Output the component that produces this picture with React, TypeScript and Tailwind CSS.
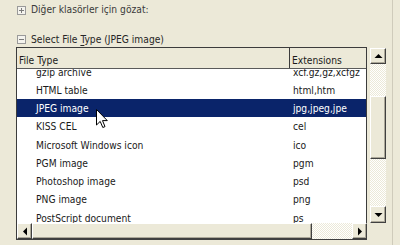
import React from "react";

const rows: [string, string][] = [
  ["gzip archive", "xcf.gz,gz,xcfgz"],
  ["HTML table", "html,htm"],
  ["JPEG image", "jpg,jpeg,jpe"],
  ["KISS CEL", "cel"],
  ["Microsoft Windows icon", "ico"],
  ["PGM image", "pgm"],
  ["Photoshop image", "psd"],
  ["PNG image", "png"],
  ["PostScript document", "ps"],
];

const track =
  "bg-[repeating-conic-gradient(#ffffff_0_25%,#ece9d8_0_50%)] bg-[length:2px_2px]";

function Btn({ dir, className = "" }: { dir: "up" | "down" | "left" | "right"; className?: string }) {
  const pts =
    dir === "up"
      ? "4,1 0,5 8,5"
      : dir === "down"
      ? "0,1 8,1 4,5"
      : dir === "left"
      ? "5,0 5,8 1,4"
      : "1,0 1,8 5,4";
  const isV = dir === "up" || dir === "down";
  return (
    <div
      className={`flex items-center justify-center bg-[#ece9d8] border-t border-l border-t-white border-l-white border-r border-b border-r-[#404040] border-b-[#404040] shadow-[inset_-1px_-1px_#aca899] ${className}`}
    >
      <svg width={isV ? 9 : 6} height={isV ? 6 : 9} viewBox={isV ? "0 0 8 6" : "0 0 6 8"}>
        <polygon points={pts} fill="#000" />
      </svg>
    </div>
  );
}

function Expander({ open }: { open: boolean }) {
  return (
    <svg width="9" height="9" viewBox="0 0 9 9" className="shrink-0">
      <rect x="0.5" y="0.5" width="8" height="8" fill="#f4f3ee" stroke="#9a9a9a" />
      <line x1="2" y1="4.5" x2="7" y2="4.5" stroke="#7a7a7a" />
      {!open && <line x1="4.5" y1="2" x2="4.5" y2="7" stroke="#7a7a7a" />}
    </svg>
  );
}

export default function App() {
  return (
    <div
      className="relative w-[400px] h-[245px] overflow-hidden bg-[#ece9d8] text-[10.2px] text-[#1a1a1a]"
      style={{ fontFamily: '"DejaVu Sans Condensed", "DejaVu Sans", "Liberation Sans", sans-serif', fontStretch: "condensed" }}
    >
      <div className="flex h-full">
        <div className="w-[393px] h-full border-r border-[#cfcbbb] flex flex-col">
          <div className="h-[20px] flex items-center pl-[17px] gap-[5px] text-[#3a3a3a]">
            <Expander open={false} />
            <span>Diğer klasörler için gözat:</span>
          </div>
          <div className="h-[12px]" />
          <div className="h-[15px] flex items-center pl-[17px] gap-[5px] text-[#262626]">
            <Expander open={true} />
            <span>
              Select File <span className="underline underline-offset-2">T</span>ype (JPEG image)
            </span>
          </div>
          <div className="flex pl-[16px]">
            <div className="w-[351px] flex flex-col">
              <div className="h-[176px] border-t border-l border-r border-[#3c3c3c] bg-white flex flex-col">
                <div className="h-[21px] shrink-0 flex bg-[#ece9d8] border-b border-[#5a5a5a]">
                  <div className="w-[273px] flex items-center pl-[2px] pt-[6px] border-r border-[#3c3c3c]">
                    File Type
                  </div>
                  <div className="flex-1 flex items-center pl-[2px] pt-[6px] bg-[#ece9d8]">Extensions</div>
                </div>
                <div className="flex-1 overflow-hidden">
                  <div className="mt-[-6.4px]">
                    {rows.map(([a, b]) => {
                      const sel = a === "JPEG image";
                      return (
                        <div
                          key={a}
                          className={`h-[18.25px] flex items-center pt-[1px] whitespace-nowrap overflow-hidden ${
                            sel ? "bg-[#0a246a] text-white" : "text-[#1a1a1a]"
                          }`}
                        >
                          <div className="w-[276px] pl-[19px] shrink-0">{a}</div>
                          <div>{b}</div>
                        </div>
                      );
                    })}
                  </div>
                </div>
              </div>
              <div className={`h-[17px] flex border-l border-[#3c3c3c] border-b border-b-[#404040] ${track}`}>
                <Btn dir="left" className="w-[15px] h-full" />
                <div className="w-[280px] h-full bg-[#ece9d8] border-t border-l border-t-white border-l-white border-r border-b border-r-[#404040] border-b-[#404040] shadow-[inset_-1px_-1px_#aca899]" />
                <div className="flex-1" />
                <Btn dir="right" className="w-[15px] h-full" />
              </div>
            </div>
            <div className="ml-[3px] w-[16px] h-[176px] flex flex-col pt-[1px]">
              <Btn dir="up" className="h-[16px] w-full shrink-0" />
              <div className={`flex-1 flex flex-col ${track}`}>
                <div className="h-[32px]" />
                <div className="h-[63px] bg-[#ece9d8] border-t border-l border-t-white border-l-white border-r border-b border-r-[#404040] border-b-[#404040] shadow-[inset_-1px_-1px_#aca899]" />
                <div className="flex-1" />
              </div>
              <Btn dir="down" className="h-[17px] w-full shrink-0" />
            </div>
          </div>
        </div>
      </div>
      <svg
        className="absolute left-[96px] top-[109px]"
        width="12"
        height="20"
        viewBox="0 0 12 20"
      >
        <path
          d="M0.5 0.5 L0.5 16 L4.2 12.4 L6.8 18.5 L9 17.6 L6.5 11.6 L11.3 11.6 Z"
          fill="#fff"
          stroke="#000"
          strokeWidth="1"
          strokeLinejoin="miter"
        />
      </svg>
    </div>
  );
}
